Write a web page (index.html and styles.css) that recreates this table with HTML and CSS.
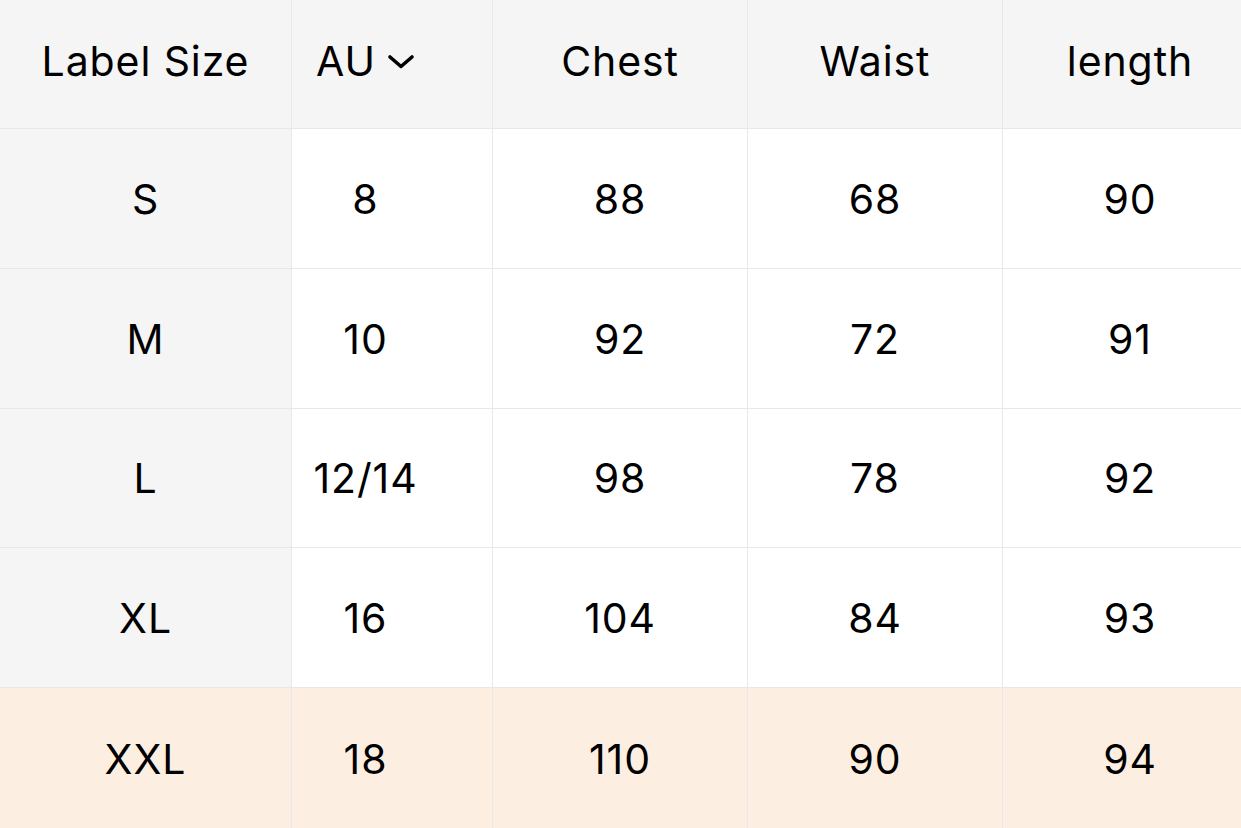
FILE: index.html
```html
<!DOCTYPE html>
<html lang="en">
<head>
<meta charset="utf-8">
<title>Size chart</title>
<link rel="stylesheet" href="styles.css">
</head>
<body>
<div class="chart">
  <div class="cell head label">Label Size</div>
  <div class="cell head au"><span>AU</span><svg class="chev" width="28" height="16" viewBox="0 0 28 16"><path d="M3 3 L14 12.5 L25 3" fill="none" stroke="#000" stroke-width="3.6" stroke-linecap="round" stroke-linejoin="round"/></svg></div>
  <div class="cell head">Chest</div>
  <div class="cell head">Waist</div>
  <div class="cell head">length</div>

  <div class="cell label">S</div>
  <div class="cell au">8</div>
  <div class="cell">88</div>
  <div class="cell">68</div>
  <div class="cell">90</div>

  <div class="cell label">M</div>
  <div class="cell au">10</div>
  <div class="cell">92</div>
  <div class="cell">72</div>
  <div class="cell">91</div>

  <div class="cell label">L</div>
  <div class="cell au">12/14</div>
  <div class="cell">98</div>
  <div class="cell">78</div>
  <div class="cell">92</div>

  <div class="cell label">XL</div>
  <div class="cell au">16</div>
  <div class="cell">104</div>
  <div class="cell">84</div>
  <div class="cell">93</div>

  <div class="cell label hl">XXL</div>
  <div class="cell au hl">18</div>
  <div class="cell hl">110</div>
  <div class="cell hl">90</div>
  <div class="cell hl">94</div>
</div>
</body>
</html>
```
FILE: styles.css
```css
html, body {
  margin: 0;
  padding: 0;
  background: #ffffff;
  overflow: hidden;
}
body {
  width: 1241px;
  height: 828px;
  font-family: "Inter", "Roboto", "Liberation Sans", sans-serif;
  color: #000;
}
.chart {
  display: grid;
  grid-template-columns: 291px 200px 254px 254px 254px;
  grid-template-rows: 128px 139px 139px 138px 139px 141px;
  gap: 1px;
  background: #e8e8e8;
  width: max-content;
}
.cell {
  background: #ffffff;
  display: flex;
  align-items: center;
  justify-content: center;
  font-size: 41px;
  letter-spacing: 0.9px;
  font-weight: 400;
  line-height: 1;
  padding-top: 1px;
  box-sizing: border-box;
}
.cell.head {
  background: #f5f5f5;
  padding-top: 0;
  padding-bottom: 6px;
}
.cell.label {
  background: #f5f5f5;
}
.cell.au {
  padding-right: 53px;
}
.cell.hl {
  background: #fdeee2;
}
.chev {
  margin-left: 11px;
  margin-top: 2px;
}
```
